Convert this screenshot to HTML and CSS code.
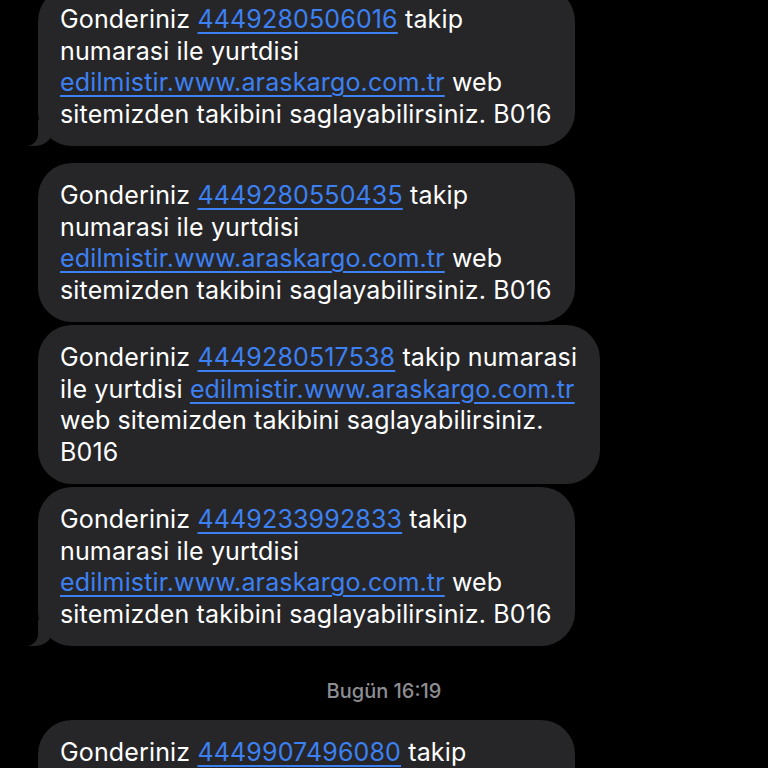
FILE: index.html
```html
<!DOCTYPE html>
<html lang="tr">
<head>
<meta charset="utf-8">
<link rel="stylesheet" href="styles.css">
</head>
<body>
<main class="thread">
  <div class="group group-first">
    <div class="bubble tail">Gonderiniz <a class="link">4449280506016</a> takip<br>numarasi ile yurtdisi<br><a class="link">edilmistir.www.araskargo.com.tr</a> web<br>sitemizden takibini saglayabilirsiniz. B016</div>
  </div>
  <div class="group">
    <div class="bubble">Gonderiniz <a class="link">4449280550435</a> takip<br>numarasi ile yurtdisi<br><a class="link">edilmistir.www.araskargo.com.tr</a> web<br>sitemizden takibini saglayabilirsiniz. B016</div>
    <div class="bubble">Gonderiniz <a class="link">4449280517538</a> takip numarasi<br>ile yurtdisi <a class="link">edilmistir.www.araskargo.com.tr</a><br>web sitemizden takibini saglayabilirsiniz.<br>B016</div>
    <div class="bubble tail">Gonderiniz <a class="link">4449233992833</a> takip<br>numarasi ile yurtdisi<br><a class="link">edilmistir.www.araskargo.com.tr</a> web<br>sitemizden takibini saglayabilirsiniz. B016</div>
  </div>
  <div class="stamp">Bugün 16:19</div>
  <div class="group">
    <div class="bubble">Gonderiniz <a class="link">4449907496080</a> takip<br>numarasi ile yurtdisi<br><a class="link">edilmistir.www.araskargo.com.tr</a> web<br>sitemizden takibini saglayabilirsiniz. B016</div>
  </div>
</main>
</body>
</html>
```
FILE: styles.css
```css
html, body {
  margin: 0;
  padding: 0;
  background: #000;
  height: 768px;
  overflow: hidden;
}
.thread {
  display: flex;
  flex-direction: column;
  padding-left: 38px;
  font-family: Inter, "Noto Sans", sans-serif;
}
.group {
  display: flex;
  flex-direction: column;
  align-items: flex-start;
  gap: 3px;
}
.group-first {
  margin-top: -13px;
  margin-bottom: 17px;
}
.bubble {
  position: relative;
  background: #262628;
  color: #fff;
  font-size: 25px;
  letter-spacing: 0.15px;
  line-height: 31.5px;
  white-space: nowrap;
  padding: 17px 23px 16px 22px;
  border-radius: 34px;
}
.link {
  color: #3d80f2;
  text-decoration: underline;
  text-decoration-thickness: 1.5px;
  text-underline-offset: 4px;
}
.tail::before {
  content: "";
  position: absolute;
  bottom: 0;
  left: -10px;
  width: 24px;
  height: 26px;
  background: #262628;
  border-bottom-right-radius: 18px 14px;
}
.tail::after {
  content: "";
  position: absolute;
  bottom: 0;
  left: -28px;
  width: 28px;
  height: 26px;
  background: #000;
  border-bottom-right-radius: 12px;
}
.stamp {
  align-self: center;
  margin-left: -38px;
  padding: 33px 0 17px;
  color: #8e8e93;
  font-size: 20px;
  font-weight: 500;
  line-height: 24px;
}
```
